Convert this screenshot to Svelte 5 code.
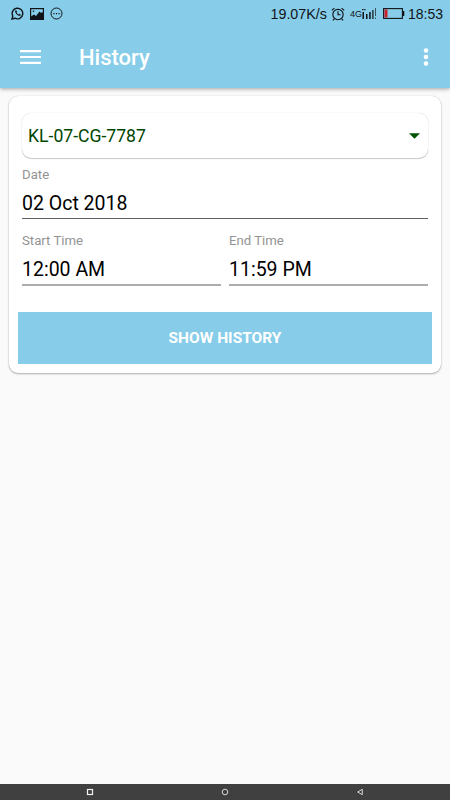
<script>
    let vehicle = $state('KL-07-CG-7787');
    let date = $state('02 Oct 2018');
    let startTime = $state('12:00 AM');
    let endTime = $state('11:59 PM');
</script>

<div class="screen">
    <header class="top">
        <div class="status-bar">
            <div class="notifications">
                <svg width="13" height="13" viewBox="0 0 13 13" fill="none" stroke="#101418">
                    <path d="M1 12l.8-3A5.3 5.3 0 1 1 4 11.200z" stroke-width="1.400" />
                    <path d="M4.300 3.500c-.9 1.500 1.800 5.300 4.500 5.300.8 0 1.200-1 .8-1.300l-1.200-.8-.8.7c-.9-.3-1.600-1-2-1.900l.5-.7-.6-1.400z" fill="#101418" stroke="none" />
                </svg>
                <svg width="14" height="12" viewBox="0 0 14 12">
                    <rect x=".6" y=".6" width="12.800" height="10.800" fill="none" stroke="#101418" stroke-width="1.200" />
                    <path d="M1 11V8.500l3-2 2 1.500 3.500-4.500L11 5l1-1 1 1v6z" fill="#101418" />
                    <circle cx="3.500" cy="3.200" r=".8" fill="#101418" />
                </svg>
                <svg width="13" height="13" viewBox="0 0 13 13">
                    <circle cx="6.500" cy="6.500" r="5.500" fill="none" stroke="#101418" />
                    <path d="M3.300 6h1.200v1.200H3.300zM5.900 6h1.200v1.200H5.900zM8.500 6h1.200v1.200H8.500z" fill="#101418" />
                </svg>
            </div>
            <div class="system">
                <span class="speed">19.07K/s</span>
                <svg class="alarm" width="14" height="14" viewBox="0 0 13 13" fill="none" stroke="#101418" stroke-width="1.050">
                    <circle cx="6.500" cy="7" r="4.800" />
                    <path d="M6.500 4v3.200H9M.7 3.200L3.200 1M12.300 3.200L9.800 1M3 11l-1.200 1.500M10 11l1.200 1.500" />
                </svg>
                <span class="network">4G</span>
                <svg class="signal" width="15" height="11" viewBox="0 0 15 11" fill="#101418">
                    <path d="M.5 4h1.500v7H.5zM4 6h1.500v5H4zM7.200 4h1.500v7H7.200zM0 1h1.500v1.200H0zM2.200 1h1.300v1.200H2.200z" />
                    <path d="M10.300 2h1.200v9h-1.200z" />
                    <path d="M13 0h1v8h-1zM13 9.500h1V11h-1z" opacity=".65" />
                </svg>
                <svg class="battery" width="22" height="11" viewBox="0 0 22 11">
                    <rect x=".6" y=".6" width="18.800" height="9.800" fill="none" stroke="#101418" stroke-width="1.100" />
                    <path d="M20 3h1.300v5H20z" fill="#101418" />
                    <path d="M1.500 1.500h3v8h-3z" fill="#c91f28" />
                </svg>
                <span class="clock">18:53</span>
            </div>
        </div>
        <div class="app-bar">
            <button class="icon-button" aria-label="Open navigation">
                <svg width="22" height="16" viewBox="0 0 22 16" fill="#fff">
                    <path d="M0 1h21v2.200H0zM0 6.900h21v2.200H0zM0 12.800h21V15H0z" />
                </svg>
            </button>
            <h1>History</h1>
            <button class="icon-button" aria-label="More options">
                <svg width="6" height="20" viewBox="0 0 6 20" fill="#fff">
                    <circle cx="3" cy="3.500" r="2.300" />
                    <circle cx="3" cy="10" r="2.300" />
                    <circle cx="3" cy="16.500" r="2.300" />
                </svg>
            </button>
        </div>
    </header>

    <main>
        <section class="card">
            <button class="spinner">
                <span>{vehicle}</span>
                <svg width="11" height="6" viewBox="0 0 11 6" fill="#005400">
                    <path d="M0 .2h11L5.500 5.700z" />
                </svg>
            </button>
            <div class="field date">
                <span class="label">Date</span>
                <span class="value">{date}</span>
            </div>
            <div class="times">
                <div class="field">
                    <span class="label">Start Time</span>
                    <span class="value">{startTime}</span>
                </div>
                <div class="field">
                    <span class="label">End Time</span>
                    <span class="value">{endTime}</span>
                </div>
            </div>
            <button class="show">SHOW HISTORY</button>
        </section>
    </main>

    <nav class="nav-bar">
        <svg width="8" height="8" viewBox="0 0 8 8" fill="none" stroke="#f0f0f0">
            <rect x="1.500" y="1.500" width="5" height="5" stroke-width="1.200" />
        </svg>
        <svg width="8" height="8" viewBox="0 0 8 8" fill="none" stroke="#d8d8d8">
            <circle cx="4" cy="4" r="2.800" />
        </svg>
        <svg width="8" height="8" viewBox="0 0 8 8" fill="none" stroke="#d8d8d8">
            <path d="M6.300 1.300v5.400L1.700 4z" />
        </svg>
    </nav>
</div>

<style>
    :global(body) {
        margin: 0;
    }

    .screen {
        display: flex;
        flex-direction: column;
        height: 800px;
        background: #fafafa;
        font-family: Roboto, sans-serif;
        color: #000;
        overflow: hidden;
    }

    button {
        padding: 0;
        border: none;
        background: none;
        font-family: inherit;
        cursor: pointer;
    }

    svg {
        display: block;
        flex: none;
    }

    .top {
        height: 88px;
        background: #87cde9;
        box-shadow: 0 1px 4px rgba(0, 0, 0, 0.35);
    }

    .status-bar {
        display: flex;
        justify-content: space-between;
        align-items: center;
        height: 27px;
        padding: 0 7px 0 11px;
        font-family: "Liberation Sans", sans-serif;
        font-size: 14px;
        color: #101418;
    }

    .notifications,
    .system {
        display: flex;
        align-items: center;
    }

    .notifications {
        gap: 6px;
    }

    .speed {
        font-size: 14.3px;
    }

    .alarm {
        margin: 0 5px 0 4px;
    }

    .network {
        font-size: 9px;
    }

    .battery {
        margin: 0 3px 0 6px;
    }

    .app-bar {
        display: flex;
        align-items: center;
        height: 61px;
        box-sizing: border-box;
        padding: 0 21px 1px 20px;
    }

    h1 {
        flex: 1;
        margin: 2px 0 0 37px;
        font-size: 22px;
        font-weight: 500;
        line-height: 26px;
        color: #fff;
    }

    main {
        flex: 1;
        padding: 8px 9px;
    }

    .card {
        height: 277px;
        box-sizing: border-box;
        padding: 17px 9px 0;
        border-radius: 9px;
        background: #fff;
        box-shadow: 0 1px 2px rgba(0, 0, 0, 0.3), 0 0 1px rgba(0, 0, 0, 0.2);
    }

    .spinner {
        display: flex;
        justify-content: space-between;
        align-items: center;
        width: 406px;
        height: 45px;
        margin: 0 4px;
        padding: 1px 8px 0 6px;
        border-radius: 9px;
        background: #fff;
        box-shadow: 0 1px 1px rgba(0, 0, 0, 0.2), 0 0 1px rgba(0, 0, 0, 0.25);
        font-size: 17.6px;
        color: #004600;
    }

    .field {
        display: flex;
        flex: 1;
        flex-direction: column;
        border-bottom: 2px solid #adadad;
    }

    .date {
        margin: 9px 4px 0;
        border-bottom: 1px solid #606060;
    }

    .label {
        font-size: 13.2px;
        line-height: 16px;
        color: #939393;
    }

    .value {
        padding: 9px 0 2px;
        font-size: 19.5px;
        line-height: 24px;
    }

    .times {
        display: flex;
        gap: 8px;
        margin: 14px 4px 26px;
    }

    .show {
        width: 100%;
        height: 52px;
        background: #87cde9;
        color: #fff;
        font-size: 15.5px;
        font-weight: 700;
    }

    .nav-bar {
        display: flex;
        justify-content: space-between;
        align-items: center;
        height: 16px;
        padding: 0 86px;
        background: #404040;
    }
</style>
